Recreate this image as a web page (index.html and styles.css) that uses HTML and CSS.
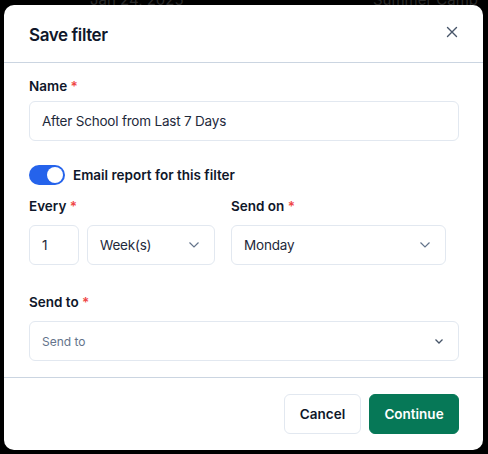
FILE: index.html
```html
<!DOCTYPE html>
<html lang="en">
  <head>
    <meta charset="UTF-8" />
    <meta name="viewport" content="width=device-width, initial-scale=1.0" />
    <title>Save filter</title>
    <link rel="stylesheet" href="styles.css">
  </head>
  <body>
    <div class="page-row">
      <span class="page-date">Jan 24, 2025</span>
      <span class="page-name">Summer Camp</span>
    </div>

    <div class="modal" role="dialog" aria-labelledby="modalTitle">
      <div class="modal-header">
        <h2 class="modal-title" id="modalTitle">Save filter</h2>
        <button class="close-btn" aria-label="Close">
          <svg width="12" height="12" viewBox="0 0 12 12">
            <path d="M1.5 1.5l9 9M10.5 1.5l-9 9" stroke="#475569" stroke-width="1.4" stroke-linecap="round" />
          </svg>
        </button>
      </div>

      <div class="modal-body">
        <label class="label label-name">Name <span class="req">*</span></label>
        <div class="input">After School from Last 7 Days</div>

        <div class="toggle-row">
          <span class="toggle"><span class="knob"></span></span>
          <span class="toggle-label">Email report for this filter</span>
        </div>

        <div class="schedule">
          <div class="field-every">
            <label class="label">Every <span class="req">*</span></label>
            <div class="every-inputs">
              <div class="input input-num">1</div>
              <div class="input select select-unit">
                Week(s)
                <svg class="chev" width="12" height="8" viewBox="0 0 12 8"><path d="M1.5 1.5l4.5 4.5 4.5-4.5" fill="none" stroke="#64748b" stroke-width="1.2" /></svg>
              </div>
            </div>
          </div>
          <div class="field-day">
            <label class="label">Send on <span class="req">*</span></label>
            <div class="input select select-day">
              Monday
              <svg class="chev" width="12" height="8" viewBox="0 0 12 8"><path d="M1.5 1.5l4.5 4.5 4.5-4.5" fill="none" stroke="#64748b" stroke-width="1.2" /></svg>
            </div>
          </div>
        </div>

        <label class="label label-sendto">Send to <span class="req">*</span></label>
        <div class="input select select-sendto">
          <span class="placeholder">Send to</span>
          <svg class="chev" width="10" height="7" viewBox="0 0 10 7"><path d="M1.5 1.5l3.5 3.5 3.5-3.5" fill="none" stroke="#475569" stroke-width="1.3" /></svg>
        </div>
      </div>

      <div class="modal-footer">
        <button class="btn btn-cancel">Cancel</button>
        <button class="btn btn-primary">Continue</button>
      </div>
    </div>
  </body>
</html>
```

FILE: styles.css
```css
body {
  margin: 0;
  height: 454px;
  overflow: hidden;
  background-color: #000;
  font-family: Inter, "Noto Sans", sans-serif;
  color: #0f172a;
}
.page-row {
  display: flex;
  justify-content: space-between;
  margin-top: -10px;
  padding: 0 10px 0 90px;
  font-size: 15px;
  color: #2a2a2a;
}
.modal {
  position: absolute;
  top: 5px;
  left: 4px;
  width: 479px;
  background: #fff;
  border-radius: 10px;
  display: flex;
  flex-direction: column;
}
.modal-header {
  display: flex;
  justify-content: space-between;
  align-items: center;
  height: 57px;
  padding: 0 24px 0 25px;
  border-bottom: 1px solid #cbd5e1;
}
.modal-title {
  margin: 3px 0 0;
  font-size: 17px;
  letter-spacing: -0.4px;
  font-weight: 600;
  color: #0f172a;
}
.close-btn {
  border: none;
  background: none;
  padding: 0;
  margin: -4px 0 0;
  width: 14px;
  height: 14px;
  display: flex;
  align-items: center;
  justify-content: center;
  cursor: pointer;
}
.modal-body {
  padding: 13px 24px 16px 25px;
}
.label {
  display: block;
  font-size: 13.5px;
  line-height: 20px;
  font-weight: 600;
  color: #0f172a;
  margin-bottom: 9px;
}
.label-name {
  margin-bottom: 5px;
}
.req {
  color: #ef4444;
}
.input {
  box-sizing: border-box;
  height: 40px;
  padding: 0 12px;
  border: 1px solid #e2e8f0;
  border-radius: 6px;
  display: flex;
  align-items: center;
  font-size: 13.5px;
  letter-spacing: -0.2px;
  color: #1e293b;
}
.toggle-row {
  display: flex;
  align-items: center;
  gap: 8px;
  margin-top: 24px;
  height: 20px;
}
.toggle {
  width: 36px;
  height: 20px;
  border-radius: 10px;
  background: #2563eb;
  display: flex;
  align-items: center;
  justify-content: flex-end;
  padding: 0 2px;
  box-sizing: border-box;
}
.knob {
  width: 16px;
  height: 16px;
  border-radius: 50%;
  background: #fff;
}
.toggle-label {
  font-size: 13.5px;
  font-weight: 600;
}
.schedule {
  display: flex;
  gap: 16px;
  margin-top: 11px;
}
.every-inputs {
  display: flex;
  gap: 8px;
}
.input-num {
  width: 50px;
}
.select {
  justify-content: space-between;
}
.select-unit {
  width: 128px;
}
.select-day {
  width: 215px;
}
.chev {
  margin-right: 2px;
}
.label-sendto {
  margin-top: 27px;
}
.placeholder {
  font-size: 12px;
  letter-spacing: 0;
  color: #64748b;
}
.modal-footer {
  display: flex;
  justify-content: flex-end;
  gap: 8px;
  padding: 16px 24px 16px 25px;
  border-top: 1px solid #cbd5e1;
}
.btn {
  height: 40px;
  border-radius: 6px;
  font-family: inherit;
  font-size: 13.5px;
  font-weight: 600;
  cursor: pointer;
}
.btn-cancel {
  width: 77px;
  background: #fff;
  border: 1px solid #e2e8f0;
  color: #0f172a;
}
.btn-primary {
  width: 90px;
  background: #067857;
  border: 1px solid #067857;
  color: #fff;
}
```
